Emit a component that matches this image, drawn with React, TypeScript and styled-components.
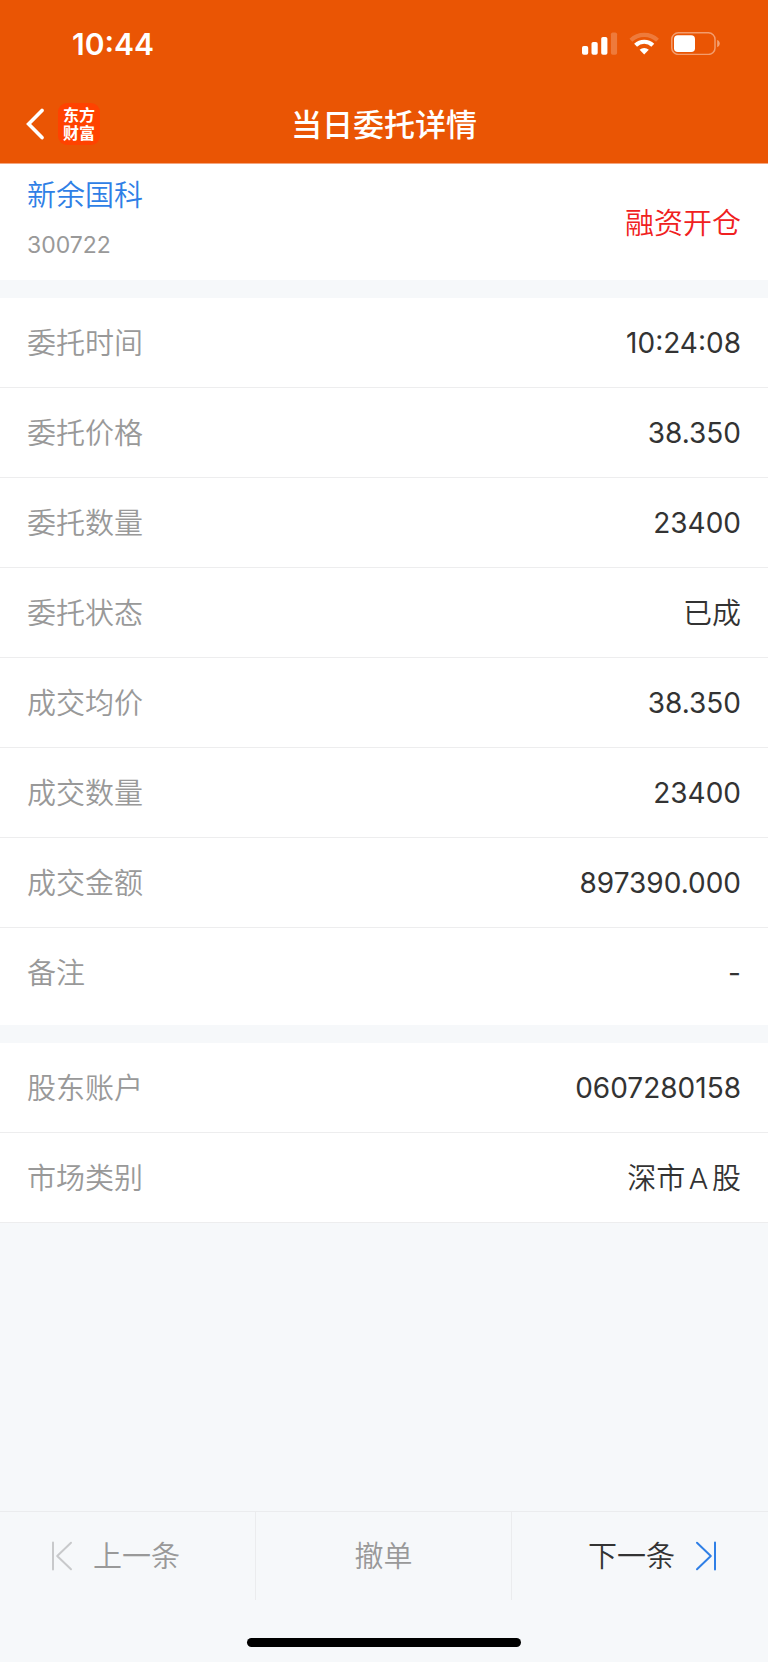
import React from "react";
import styled, { createGlobalStyle } from "styled-components";

const GlobalStyle = createGlobalStyle`
  *, *::before, *::after { box-sizing: border-box; }
  body {
    margin: 0;
    background: #f6f8fa;
    font-family: Inter, "Noto Sans CJK SC", sans-serif;
    font-size: 28px;
    line-height: 40px;
    color: #333333;
  }
`;

const Page = styled.div`
  display: flex;
  flex-direction: column;
  min-height: 100vh;
`;

const Header = styled.header`
  border-bottom: 1px solid #f4a67f;
  background: #ea5504;
  color: #ffffff;
`;

const StatusBar = styled.div`
  display: flex;
  align-items: center;
  justify-content: space-between;
  height: 88px;
  padding: 0 48px 0 72px;
`;

const Clock = styled.time`
  font-size: 30px;
  font-weight: 600;
`;

const StatusIcons = styled.div`
  display: flex;
  align-items: center;
  gap: 11px;
  padding-bottom: 2px;
`;

const NavBar = styled.div`
  display: grid;
  grid-template-columns: 1fr auto 1fr;
  align-items: center;
  height: 75px;
  padding: 0 26px 3px;
`;

const NavStart = styled.div`
  display: flex;
  align-items: center;
  gap: 14px;
`;

const IconButton = styled.button`
  display: flex;
  padding: 0;
  border: 0;
  background: none;
  color: inherit;
  cursor: pointer;
`;

const Logo = styled.a`
  display: flex;
  align-items: center;
  justify-content: center;
  width: 42px;
  height: 42px;
  border-radius: 9px;
  background: #ff4200;
  color: #ffffff;
  font-size: 16px;
  font-weight: 700;
  line-height: 18px;
  text-align: center;
  text-decoration: none;
`;

const Title = styled.h1`
  margin: 0;
  padding-top: 2px;
  font-size: 31px;
  font-weight: 500;
  line-height: 40px;
`;

const Content = styled.main`
  display: flex;
  flex: 1;
  flex-direction: column;
  gap: 18px;
`;

const Summary = styled.section`
  display: flex;
  align-items: center;
  justify-content: space-between;
  height: 116px;
  padding: 0 27px;
  background: #ffffff;
`;

const StockInfo = styled.div`
  padding-bottom: 3px;
`;

const StockName = styled.a`
  display: block;
  color: #2f7fe6;
  font-size: 29px;
  font-weight: 350;
  text-decoration: none;
`;

const StockCode = styled.div`
  margin-top: 9px;
  color: #999999;
  font-size: 23px;
`;

const Direction = styled.span`
  padding-top: 4px;
  color: #f02020;
  font-size: 29px;
  font-weight: 350;
`;

const Details = styled.dl<{ $padded?: boolean }>`
  margin: 0;
  padding-bottom: ${(p) => (p.$padded ? 7 : 0)}px;
  background: #ffffff;
`;

const Row = styled.div<{ $last?: boolean }>`
  display: flex;
  align-items: center;
  justify-content: space-between;
  height: 90px;
  padding: 0 27px;
  border-bottom: 1px solid ${(p) => (p.$last ? "transparent" : "#ededee")};
`;

const Label = styled.dt`
  padding-top: 2px;
  color: #999999;
  font-size: 29px;
  font-weight: 350;
`;

const Value = styled.dd<{ $text?: boolean }>`
  margin: 0;
  padding-top: ${(p) => (p.$text ? 2 : 0)}px;
  font-size: ${(p) => (p.$text ? 29 : 28)}px;
  font-weight: ${(p) => (p.$text ? 350 : 400)};
  text-autospace: normal;
`;

const Footer = styled.footer`
  display: flex;
  flex-direction: column;
  align-items: center;
  border-top: 1px solid #ebecee;
`;

const Actions = styled.nav`
  display: grid;
  grid-template-columns: repeat(3, 1fr);
  width: 100%;
  height: 88px;
`;

const Action = styled.button<{ $align?: string }>`
  display: flex;
  align-items: center;
  justify-content: ${(p) => p.$align ?? "center"};
  gap: 20px;
  padding: 0 51px;
  border: 0;
  border-right: 1px solid #ebecee;
  background: none;
  color: #333333;
  font-family: inherit;
  font-size: 29px;
  font-weight: 350;
  line-height: 40px;
  cursor: pointer;

  &:disabled {
    color: #999999;
    cursor: default;
  }

  &:last-child {
    border-right: 0;
  }
`;

const ActionText = styled.span`
  padding-top: 2px;
`;

const HomeIndicator = styled.div`
  width: 274px;
  max-width: 50%;
  height: 9px;
  margin: 38px 0 15px;
  border-radius: 5px;
  background: #000000;
`;

const orderRows = [
  { label: "委托时间", value: "10:24:08" },
  { label: "委托价格", value: "38.350" },
  { label: "委托数量", value: "23400" },
  { label: "委托状态", value: "已成", text: true },
  { label: "成交均价", value: "38.350" },
  { label: "成交数量", value: "23400" },
  { label: "成交金额", value: "897390.000" },
  { label: "备注", value: "-" },
];

const accountRows = [
  { label: "股东账户", value: "0607280158" },
  { label: "市场类别", value: "深市A股", text: true },
];

const SignalIcon = () => (
  <svg width="36" height="23" viewBox="0 0 36 23" fill="#fff" aria-hidden="true">
    <rect x="0" y="14" width="6.2" height="8.7" rx="1.8" />
    <rect x="9.5" y="10" width="6.2" height="12.7" rx="1.8" />
    <rect x="19.2" y="5" width="6.2" height="17.7" rx="1.8" />
    <rect x="28.9" y="0.4" width="6.2" height="22.3" rx="1.8" opacity="0.22" />
  </svg>
);

const WifiIcon = () => (
  <svg width="31" height="23" viewBox="0 0 31 23" fill="none" aria-hidden="true">
    <path d="M1.9 8.2 A19.4 19.4 0 0 1 28.5 8.2" stroke="#fff" strokeWidth="4.2" opacity="0.22" />
    <path d="M6.6 13.2 A12.4 12.4 0 0 1 23.8 13.2" stroke="#fff" strokeWidth="4.2" />
    <path d="M10.6 17.8 A6.8 6.8 0 0 1 19.8 17.8 L15.2 22.5 Z" fill="#fff" />
  </svg>
);

const BatteryIcon = () => (
  <svg width="49" height="23" viewBox="0 0 49 23" fill="none" aria-hidden="true">
    <rect x="0.8" y="0.8" width="43.2" height="21.6" rx="6.5" stroke="#fff" strokeWidth="1.5" opacity="0.42" />
    <rect x="3" y="3.2" width="21" height="16.8" rx="3.8" fill="#fff" />
    <path d="M46.2 8 C49.6 9.2 49.6 14 46.2 15.2 Z" fill="#fff" opacity="0.45" />
  </svg>
);

const BackIcon = () => (
  <svg width="18" height="32" viewBox="0 0 18 32" fill="none" aria-hidden="true">
    <path d="M16 2.4 L2.6 16 L16 29.6" stroke="#fff" strokeWidth="3.6" strokeLinecap="round" strokeLinejoin="miter" />
  </svg>
);

const SkipIcon = ({ color, flip }: { color: string; flip?: boolean }) => (
  <svg width="22" height="30" viewBox="0 0 22 30" fill="none" stroke={color} strokeWidth="2" strokeLinecap="round" strokeLinejoin="round" aria-hidden="true">
    {flip ? (
      <path d="M2 1.8 L15.8 15 L2 28.2 M20 1.5 V28.5" />
    ) : (
      <path d="M20 1.8 L6.2 15 L20 28.2 M2 1.5 V28.5" />
    )}
  </svg>
);

export default function App() {
  return (
    <Page>
      <GlobalStyle />
      <Header>
        <StatusBar>
          <Clock>10:44</Clock>
          <StatusIcons>
            <SignalIcon />
            <WifiIcon />
            <BatteryIcon />
          </StatusIcons>
        </StatusBar>
        <NavBar>
          <NavStart>
            <IconButton type="button" aria-label="返回">
              <BackIcon />
            </IconButton>
            <Logo href="#">
              东方
              <br />
              财富
            </Logo>
          </NavStart>
          <Title>当日委托详情</Title>
        </NavBar>
      </Header>

      <Content>
        <Summary>
          <StockInfo>
            <StockName href="#">新余国科</StockName>
            <StockCode>300722</StockCode>
          </StockInfo>
          <Direction>融资开仓</Direction>
        </Summary>

        <Details $padded>
          {orderRows.map((row, i) => (
            <Row key={row.label} $last={i === orderRows.length - 1}>
              <Label>{row.label}</Label>
              <Value $text={row.text}>{row.value}</Value>
            </Row>
          ))}
        </Details>

        <Details>
          {accountRows.map((row) => (
            <Row key={row.label}>
              <Label>{row.label}</Label>
              <Value $text={row.text}>{row.value}</Value>
            </Row>
          ))}
        </Details>
      </Content>

      <Footer>
        <Actions>
          <Action type="button" disabled $align="flex-start">
            <SkipIcon color="#c8c9cb" />
            <ActionText>上一条</ActionText>
          </Action>
          <Action type="button" disabled>
            <ActionText>撤单</ActionText>
          </Action>
          <Action type="button" $align="flex-end">
            <ActionText>下一条</ActionText>
            <SkipIcon color="#2f7fe6" flip />
          </Action>
        </Actions>
        <HomeIndicator />
      </Footer>
    </Page>
  );
}
